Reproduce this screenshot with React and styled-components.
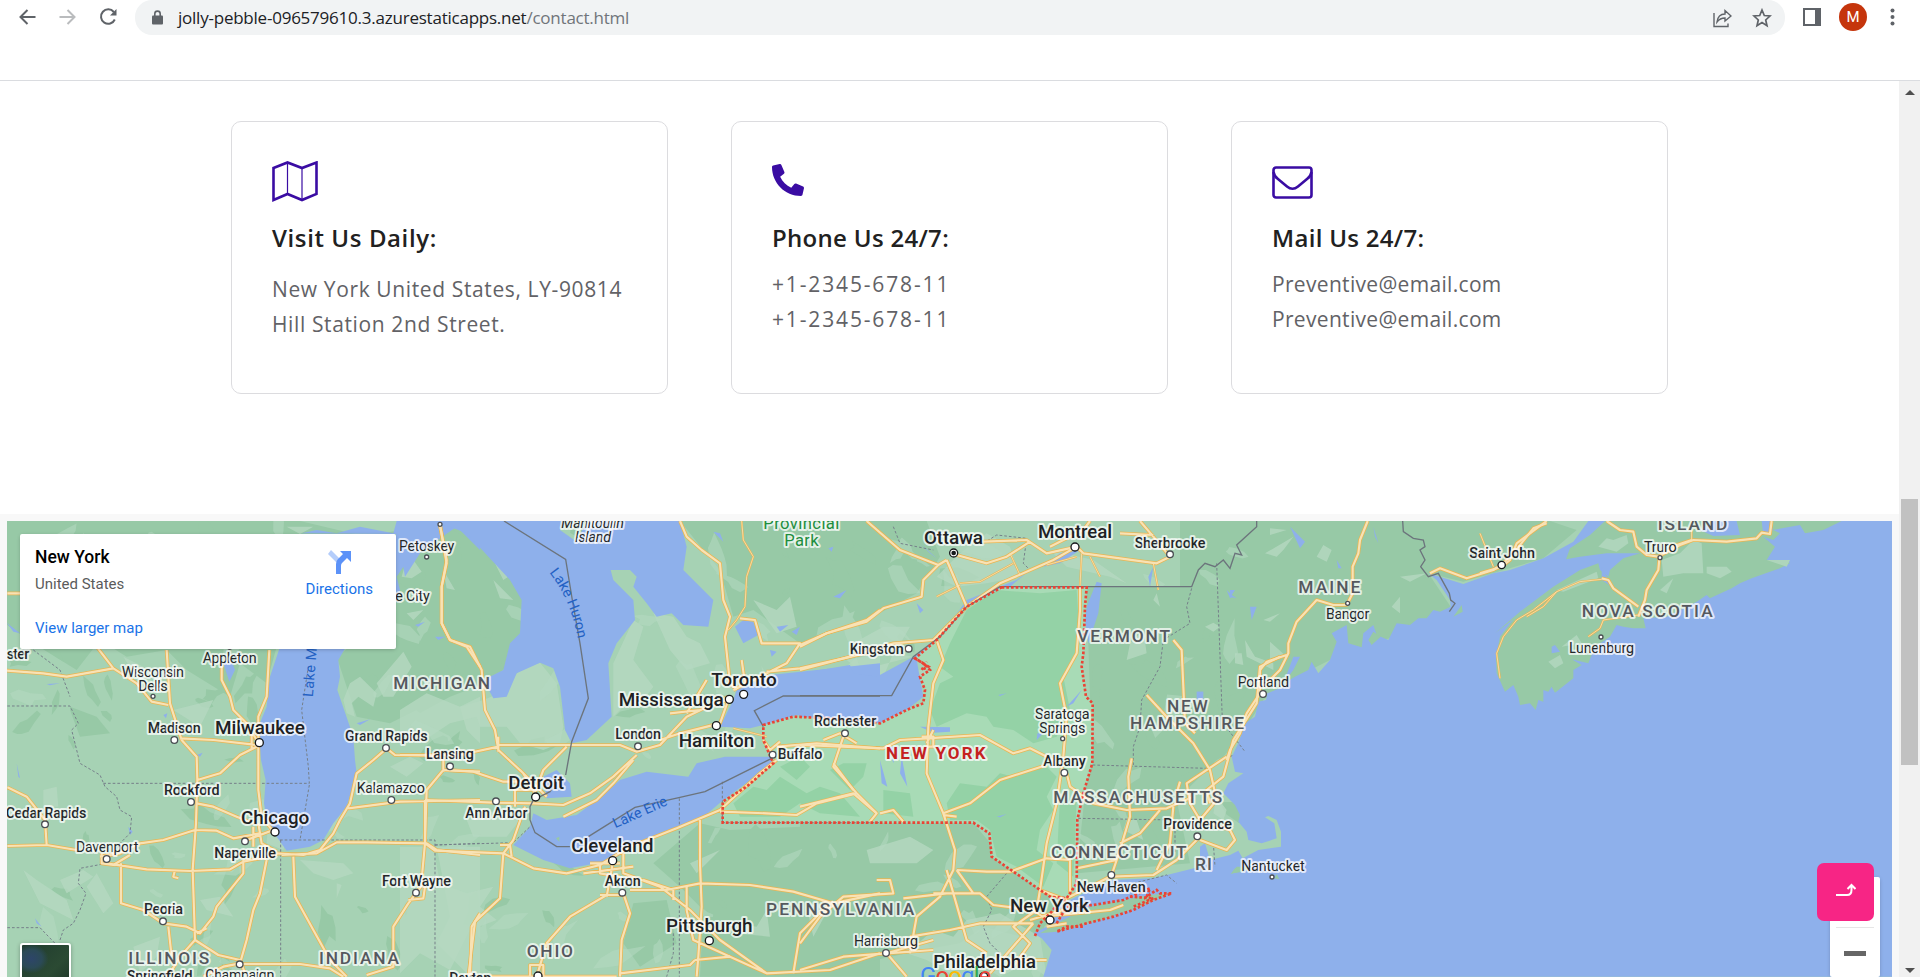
import React from "react";
import styled, { createGlobalStyle, css } from "styled-components";
import { FaPhone } from "react-icons/fa";

const Global = createGlobalStyle`
  * { box-sizing: border-box; }
  body { margin: 0; background: #fff; overflow: hidden; font-family: "Open Sans", "Noto Sans", sans-serif; }
`;

const Browser = styled.div`
  height: 977px;
  display: flex;
  flex-direction: column;
`;

const Toolbar = styled.header`
  height: 81px;
  flex: none;
  display: flex;
  align-items: flex-start;
  border-bottom: 1px solid #dadce0;
`;

const NavButtons = styled.div`
  width: 135px;
  height: 34px;
  padding-left: 19px;
  display: flex;
  align-items: center;
  gap: 23px;
`;

const AddressBar = styled.div`
  width: 1650px;
  height: 35px;
  padding: 0 13px 0 17px;
  display: flex;
  align-items: center;
  background: #f1f3f4;
  border-radius: 17px;
`;

const Url = styled.span`
  flex: 1;
  padding-left: 15px;
  color: #202124;
  font-size: 17px;
  line-height: 35px;
  letter-spacing: -0.23px;
  span { color: #70757a; }
`;

const AddressActions = styled.div`
  display: flex;
  align-items: center;
  gap: 20px;
`;

const ToolbarEnd = styled.div`
  height: 34px;
  padding-left: 18px;
  display: flex;
  align-items: center;
`;

const Avatar = styled.div`
  width: 28px;
  height: 28px;
  margin: 0 16px 0 18px;
  border-radius: 50%;
  background: #c5350c;
  color: #fff;
  font: 15px/28px Roboto, sans-serif;
  text-align: center;
`;

const Viewport = styled.div`
  flex: 1;
  min-height: 0;
  display: flex;
`;

const Page = styled.main`
  width: 1899px;
  display: flex;
  flex-direction: column;
`;

const Cards = styled.section`
  height: 433px;
  padding: 40px 0 0 231px;
  display: flex;
  gap: 63px;
`;

const Card = styled.article`
  width: 437px;
  height: 273px;
  padding: 38px 30px 38px 40px;
  border: 1px solid #dcdcdf;
  border-radius: 10px;
`;

const CardIcon = styled.div`
  height: 44px;
  display: flex;
  align-items: center;
  color: #3a0ca3;
`;

const PhoneIcon = styled(FaPhone)`
  transform: translateY(-2px) scaleX(-1);
`;

const CardTitle = styled.h3`
  margin: 17px 0 0;
  color: #212121;
  font-size: 24px;
  font-weight: 600;
  line-height: 34px;
  letter-spacing: ${(p) => p.$track}px;
  white-space: nowrap;
`;

const CardText = styled.p`
  margin: ${(p) => p.$gap}px 0 0;
  color: #626266;
  font-size: 21px;
  line-height: 35px;
  letter-spacing: ${(p) => p.$track}px;
  white-space: nowrap;
`;

const MapSection = styled.section`
  flex: 1;
  padding: 7px 7px 0;
  background: #f8f8f8;
`;

const MapFrame = styled.div`
  position: relative;
  height: 456px;
  overflow: hidden;
  font-family: Roboto, sans-serif;
`;

const MapDrawing = styled.svg`
  display: block;
`;

const PlaceCard = styled.div`
  position: absolute;
  left: 13px;
  top: 13px;
  width: 376px;
  height: 115px;
  padding: 11px 23px 0 15px;
  display: flex;
  justify-content: space-between;
  background: #fff;
  border-radius: 2px;
  box-shadow: 0 1px 4px -1px rgba(0, 0, 0, 0.3);
`;

const PlaceInfo = styled.div`
  display: flex;
  flex-direction: column;
`;

const PlaceName = styled.div`
  color: #000;
  font-size: 17.5px;
  font-weight: 500;
  line-height: 24px;
`;

const PlaceRegion = styled.div`
  margin-top: 5px;
  color: #5b5b5b;
  font-size: 15px;
  line-height: 20px;
`;

const MapLink = styled.a`
  color: #1a73e8;
  font-size: 15px;
  line-height: 20px;
`;

const LargerMap = styled(MapLink)`
  margin-top: 24px;
`;

const Directions = styled.div`
  padding-top: 5px;
  display: flex;
  flex-direction: column;
  align-items: center;
  gap: 5px;
`;

const Satellite = styled.div`
  position: absolute;
  left: 13px;
  top: 422px;
  width: 51px;
  height: 50px;
  border: 2px solid #fff;
  border-radius: 3px;
  background: radial-gradient(ellipse at 20% 30%, #2d4569 0, #2b4a56 20%, transparent 32%),
    linear-gradient(135deg, #1f3a2e, #2b4a33 60%, #1c3427);
  box-shadow: 0 1px 4px rgba(0, 0, 0, 0.3);
`;

const ZoomControl = styled.div`
  position: absolute;
  left: 1823px;
  top: 356px;
  width: 50px;
  height: 100px;
  padding: 50px 6px 0;
  background: #fff;
  border-radius: 2px;
  box-shadow: 0 1px 4px -1px rgba(0, 0, 0, 0.3);
`;

const ZoomOut = styled.div`
  height: 50px;
  border-top: 1px solid #e6e6e6;
  display: flex;
  justify-content: center;
  padding-top: 23px;
  &::after { content: ""; width: 22px; height: 5px; background: #666; }
`;

const BackToTop = styled.button`
  position: absolute;
  left: 1810px;
  top: 342px;
  width: 57px;
  height: 58px;
  padding: 0 0 4px;
  border: 0;
  border-radius: 7px;
  background: #f72585;
  display: flex;
  align-items: center;
  justify-content: center;
`;

const GoogleMark = styled.div`
  position: absolute;
  left: 913px;
  top: 443px;
  font-size: 24px;
  line-height: 24px;
  letter-spacing: -0.9px;
`;

const Letter = styled.span`
  color: ${(p) => p.$c};
`;

const Scrollbar = styled.aside`
  width: 21px;
  background: #f1f1f1;
  display: flex;
  flex-direction: column;
  align-items: center;
  padding: 9px 0 4px;
`;

const Thumb = styled.div`
  width: 17px;
  height: 266px;
  margin: 404px 0 auto;
  background: #c1c1c1;
`;

const labelKinds = {
  city: css`font-size: 57px; font-weight: 500; fill: #202124;`,
  town: css`font-size: 43px; font-weight: 500; fill: #24272a;`,
  small: css`font-size: 43px; font-weight: 400; fill: #24272a;`,
  isle: css`font-size: 43px; font-style: italic; fill: #24272a;`,
  state: css`font-size: 52px; font-weight: 500; fill: #55585e;`,
  home: css`font-size: 51px; font-weight: 700; fill: #c5221f;`,
  park: css`font-size: 50px; font-weight: 400; fill: #1e8e3e;`,
  lake: css`font-size: 43px; fill: #2361c4; stroke: none;`,
};

const MapLabel = styled.text`
  font-family: Roboto, sans-serif;
  paint-order: stroke;
  stroke: rgba(255, 255, 255, 0.72);
  stroke-width: 12px;
  stroke-linejoin: round;
  ${(p) => labelKinds[p.$kind]}
`;

/* Horizontal origins of the map sheets; each sheet is drawn at three units per pixel. */
const sheets = { west: 0, lakes: 400, york: 800, maine: 1180, nova: 1480 };
const place = (sheet) => `translate(${sheets[sheet]} 510) scale(0.33333)`;

const forest = [
  ["west", "M0 33H900L1100 80 1200 60 1440 33V420L1330 560 1170 640 1070 620 1010 440 1190 300 830 410 800 520 720 460 690 560 560 480 500 420 380 440 300 390 230 480 100 400 0 330Z"],
  ["west", "M210 600L240 680 330 670 290 620 210 590Z"],
  ["lakes", "M0 60L120 40 270 120 370 200 360 400 310 480 255 520 150 560 60 610 0 560Z"],
  ["lakes", "M840 33H1440V300L1290 370 1200 400 1060 300 1000 320 960 180 910 120Z"],
  ["lakes", "M990 960L1440 940V1400H900L910 1200 840 1130 760 1060 900 940Z"],
  ["lakes", "M700 1180L800 1170 830 1300 720 1370 670 1300Z"],
  ["york", "M0 33H380L420 140 350 250 200 330 60 350 0 400Z"],
  ["york", "M860 230L1180 230 1320 33H1440V500L1290 690 1260 740 1130 870 1170 1060 830 1090 860 800 870 560Z"],
  ["york", "M0 940H520L640 1080 800 1170 700 1290 550 1250 480 1300 320 1330 0 1400Z"],
  ["maine", "M0 33H1110L1190 60 1090 145 850 215 745 190 812 290 640 380 450 450 350 500 250 570 180 680 130 740 0 800Z"],
];

const pale = [
  ["west", "M1215 165L1240 150 1265 185 1235 205 1205 200ZM1330 180L1365 240 1340 235ZM1030 570L1050 520 1080 500 1130 550 1120 590 1075 560 1055 580 1065 620 1040 610ZM1130 520L1210 425 1235 470 1180 560 1150 560ZM860 50L940 50 900 72ZM370 440L430 470 470 540 420 520Z"],
  ["west", "M520 600L640 570 600 650ZM820 730L840 830 870 950 850 1020 800 1000ZM290 1090L340 1180 310 1210 260 1130ZM180 1110L250 1080 280 1100 200 1150ZM70 1080L110 1110 200 1170 220 1230 120 1180ZM130 840L170 830 175 890 130 890ZM600 1170L660 1160 700 1220 620 1200ZM1010 1120L1025 1125 1010 1165ZM400 1310L480 1280 470 1340 420 1390ZM900 1050L1030 1060 1060 1090 1000 1110 940 1090ZM1310 1010H1440V1390H1400L1310 1300 1350 1220ZM1170 770L1230 740 1270 760 1220 800ZM1380 590L1440 560V700L1400 660Z"],
  ["lakes", "M0 600L80 550 180 590 250 570 300 550 360 480 420 458 470 520 490 650 480 700 430 720 360 700 320 650 240 650 230 620 150 640 60 700 0 670ZM640 460L700 330 730 350 700 450 760 530 730 570 690 570 640 620ZM760 310L820 320 860 380 900 400 930 460 860 480 810 420ZM275 140L325 200 310 210ZM280 210L340 270 300 265ZM20 310L70 300 40 330Z"],
  ["lakes", "M0 1010H100L120 1120 200 1150 280 1130 240 1190 290 1230 210 1260 150 1380 60 1330 0 1390ZM290 900L360 930 320 980 220 980 200 930ZM870 1060L960 1020 890 1090ZM1000 1240L1070 1250 1100 1200 1110 1280 1000 1270ZM1060 270L1130 300 1170 260 1190 350 1130 370ZM1340 450L1440 430 1440 500 1390 490Z"],
  ["york", "M560 70L630 110 660 200 560 220 470 230 410 200 480 130ZM750 120L880 150 980 220 930 200 800 170ZM160 400L250 350 330 350 290 420 180 430 130 480 250 500 280 430 340 440 180 480ZM1060 270L1070 250 1080 290ZM990 400L1030 360 1040 430 980 450ZM200 1020L330 980 400 1020 350 1060 210 1060ZM20 1190L100 1170 40 1280ZM320 1330L400 1260 460 1280 500 1230 600 1210 720 1280 740 1400 680 1360 600 1400 520 1350 450 1390 380 1350ZM980 930L1010 930 1030 990 970 960Z"],
  ["maine", "M255 130L340 80 310 120 290 140ZM410 140L430 105 455 120 440 155ZM270 55L320 60 270 75ZM250 330L300 310 270 335ZM75 350L100 338 120 350 100 365ZM165 430L185 430 190 465 165 460ZM270 395L320 440 270 455ZM195 390L225 440 280 460 280 480 200 440ZM635 290L660 260 660 310ZM660 200L740 190 690 215ZM110 860L140 900 130 930 100 910Z"],
];

/* Small vegetation patches scattered over the inland part of the map. */
const scatter = (count, seed) => {
  let s = seed;
  const next = () => {
    s = (s * 16807) % 2147483647;
    return s / 2147483647;
  };
  return Array.from({ length: count }, () => {
    const cx = 10 + next() * 1240;
    const cy = 525 + next() * 450;
    const r = 4 + next() * 13;
    const tilt = next() * 3;
    const points = Array.from({ length: 9 }, (_, i) => {
      const a = (i / 9) * Math.PI * 2;
      const reach = r * (0.45 + next() * 0.8);
      const px = Math.cos(a) * reach * 1.5;
      const py = Math.sin(a) * reach * 0.6;
      return `${(cx + px * Math.cos(tilt) - py * Math.sin(tilt)).toFixed(1)} ${(cy + px * Math.sin(tilt) + py * Math.cos(tilt)).toFixed(1)}`;
    });
    return `M${points.join("L")}Z`;
  }).join("");
};
const palePatches = scatter(110, 4211);
const forestPatches = scatter(110, 907);

const water = [
  ["west", "M840 410L1050 390 1015 450 1020 500 1012 540 1060 680 1065 750 1070 790 1040 890 1000 940 970 990 930 1010 860 1022 830 980 800 930 792 880 797 810 783 750 775 650 800 590 810 500ZM905 70L950 60 1010 70 1080 50 1180 70 1190 33H1440V120L1370 50 1270 120 1210 170 1190 200 1200 240 1188 280V72ZM670 460L690 440 705 480 688 515ZM20 338L40 365 60 370ZM1210 170L1240 130 1260 130 1215 200Z"],
  ["west", "M590 735L608 728 600 740ZM50 760L60 805 55 800ZM490 615L502 610 498 625ZM140 522L180 520 150 526ZM1070 640L1110 628 1080 645ZM385 950L398 965 390 975ZM1305 380L1335 380 1315 390ZM1245 345L1275 335 1255 350ZM105 1225L125 1250 110 1240Z"],
  ["lakes", "M90 33H490L480 60 530 95 560 33H840L860 110 850 180 940 270 925 350 850 345 815 310 770 320 740 280 700 230 710 200 690 180 632 180 640 210 700 270 705 330 650 400 625 460 635 620 560 690 515 700 495 660 480 530 460 475 420 458 350 490 320 560 280 565 250 510 310 480 330 400 360 370 365 270 330 210 200 70 150 50ZM400 910L440 930 530 915 590 870 660 810 740 785 865 800 890 760 975 740 1115 740 1120 760 970 870 900 930 760 980 690 1010 640 1050 510 1075 430 1050 340 1005 390 950ZM430 800L470 780 510 820 515 860 440 865ZM960 650L1000 570 1010 540 1110 495 1440 460V605L1290 635 1190 615 1090 645 1050 655ZM1005 350L1030 330 1060 335 1075 375 1030 400ZM1130 350L1165 345 1140 365ZM1110 420L1130 425 1115 440ZM1175 365L1200 350 1190 375ZM940 65L970 95 960 70ZM1285 115L1300 110 1295 125Z"],
  ["york", "M0 490L150 465 160 490 230 500 340 440 400 400 380 420 350 450 370 560 320 600 240 640 0 640ZM860 290L890 215 905 220 895 310 865 400 855 330ZM760 870L775 920 760 1000 745 1000ZM650 210L690 180 630 230 480 300 420 380 500 270ZM730 170L780 130 840 120 780 160ZM1190 545L1210 545 1210 570 1190 570ZM1060 170L1050 230 1045 200ZM1350 290L1370 290 1355 330ZM360 100L410 145 390 130ZM350 280L370 300 360 310ZM1280 240L1300 260 1290 265ZM100 260L140 240 120 265Z"],
  ["maine", "M330 50L375 95 360 115ZM150 240L165 240 155 255 170 265 150 260ZM340 440L360 440 340 480 310 520ZM50 545L70 545 60 570ZM580 50L595 100 585 80ZM470 150L485 175 475 175Z"],
];

const ocean = "M-410 1400L-385 1320 -415 1285 -440 1270 -400 1250 -370 1190 -310 1160 -205 1110 -80 1105 0 1085 60 1070 60 1010 75 1000 90 1050 150 1035 175 1022 188 1045 235 1020 303 1010 303 965 290 930 265 918 255 922 283 940 290 985 245 1000 205 990 200 965 175 935 180 915 165 885 130 850 145 820 190 790 165 785 155 740 175 700 195 640 225 620 235 575 258 570 262 550 310 530 320 515 345 500 385 480 395 455 415 490 450 450 470 395 455 370 500 345 505 400 545 412 550 370 580 345 590 375 625 390 650 340 690 345 715 325 740 325 760 300 780 305 812 290 810 270 770 210 745 190 850 222 940 190 990 180 1090 145 1180 95 1225 33H2150V1400Z";
const islands = [
  ["nova", "M375 33L330 75 270 115 258 148 300 140 380 130 480 130 430 145 390 180 385 200 360 180 355 160 300 180 220 230 120 305 45 370 100 328 60 380 48 440 50 490 75 545 100 525 115 560 120 585 150 580 167 600 175 570 190 575 190 540 205 545 215 530 225 548 280 505 280 480 305 465 275 448 325 460 345 410 390 380 410 345 430 350 460 355 497 355 490 325 560 320 650 275 680 255 690 265 755 235 780 220 815 205 870 185 900 175 930 160 915 150 860 150 885 110 850 80 880 90 900 70 880 60 960 45 975 70 1030 60 1085 33Z"],
  ["york", "M770 1240L870 1190 970 1170 1050 1155 1110 1150 1020 1190 920 1225 830 1250 770 1265 720 1270ZM1295 1090L1310 1070 1350 1070 1330 1085Z"],
  ["maine", "M820 320L845 285 848 305ZM565 390L580 365 602 380 575 405ZM283 1105L290 1092 298 1108ZM152 1092L165 1075 200 1070 180 1085Z"],
  ["lakes", "M468 985L478 980 478 995Z"],
];
const islandPale = [
  ["nova", "M355 110L380 85 400 90 440 75 445 100 410 125ZM545 150L600 130 640 90 665 100 670 190 610 190 550 200ZM680 170L740 170 755 185 720 205 680 190ZM540 240L580 205 560 250ZM205 455L240 435 250 460 225 475ZM230 240L350 185 355 205 250 245ZM860 150H930L920 170ZM245 410L290 375 305 400Z"],
];
const coves = [
  ["nova", "M660 60L700 33H770L780 75 700 78ZM845 33H870L880 60 850 75ZM215 410L225 405 240 425 215 430ZM365 170L380 200 395 230 365 210Z"],
];

const newYork = "M605 232L860 232 855 290 850 430 845 470 858 560 878 580 877 760 850 850 832 930 830 1120 800 1165 750 1160 640 1085 575 1040 568 970 520 938H-232L-232 875 -160 830 -80 760 -110 690 -110 645 -20 620 90 625 240 640 320 600 370 580 375 540 360 500 390 480 370 460 345 445 410 390 500 290Z";
const yorkShades = "M500 300L590 240 720 250 830 240 840 400 790 500 810 600 770 680 700 700 640 660 580 650 560 620 500 610 410 650 390 600 420 520 460 500 420 470 450 400ZM480 820L560 830 600 790 640 800 740 770 770 800 740 860 760 900 720 960 710 1020 760 1060 730 1130 650 1070 590 1040 570 960 530 930 450 930 440 880ZM-200 880L-140 830 -100 840 -60 800 20 850 60 830 120 850 180 920 60 910 0 880 -60 920 -180 920ZM250 840L330 850 340 920 250 910ZM90 780L130 760 200 760 190 800 150 840ZM-60 770L0 740 30 770 -10 810ZM780 860L830 870 820 1100 770 1060Z";

const roads = [
  ["west", "M22 250H60M20 482L130 490 200 500 340 475 290 410M340 475L410 520 455 575 505 585M500 420L510 580 545 690 590 740 592 810 588 940 578 1080 585 1290 655 1335 720 1350 735 1390M665 460V510L690 560 700 600 740 640 770 690M808 420L800 560 775 620 775 840 785 920 820 965M540 685L640 690 770 705M770 710L720 735 660 790 592 810M590 880L640 890 710 920 760 940M22 832L80 860 135 930 140 1005M22 1008L140 1005 230 1020M300 1040L360 1030 420 1000 490 990 585 960 650 962 700 985 780 970M320 1060L440 1078 570 1083 690 1078 730 1055 830 1035M363 1060V1180L430 1200 490 1240 560 1250 600 1270 640 1220 650 1190 730 1090V1050M525 1080L520 1100 535 1105M505 1250L515 1340M585 1290L540 1340 510 1390M800 1050L780 1150 760 1200 740 1290 720 1360 670 1370 610 1400M830 1030L910 1035 960 1020 1000 970 1020 930 1050 880 1070 790 1120 750 1160 715 1185 735 1320 737M845 1035L950 1030 1010 997 1100 997 1280 1000 1310 1020 1440 1035M1045 895L1200 875 1440 870M1440 785L1330 780 1280 840 1275 1000 1263 1130 1225 1180 1180 1250V1370L1100 1395M880 1040L885 1160 940 1260 990 1350 1040 1400M720 1362H900L990 1375 1030 1400M1320 45L1340 160 1325 230 1325 340 1350 390 1400 410 1440 470M760 950V1010M775 940L785 1000 830 1025M740 990L820 960M1440 1210L1415 1250 1410 1400M590 1270L620 1255M305 1030V1060L340 1065 390 1035M755 670V720M1330 740V785M1225 1170L1270 1165 1275 1130"],
  ["lakes", "M120 45L140 150 125 230 125 340 150 390 210 410 245 480 255 600 285 660 295 720 370 790 405 850M295 705H660L710 725 780 705 860 620 985 560M0 735H180L295 710M130 780L220 785 310 815H370M75 870L280 878 400 880 490 885 570 850 640 800 710 735M490 920L590 870 640 820 700 750M375 890L340 990 310 1030 300 1165 225 1235 205 1400M75 870V1000L105 1022 310 1030M310 1030L400 1075 500 1090 600 1065 690 1010 830 955 960 900 1080 790 1130 750M360 780L440 860M500 710L430 780 400 860M840 33L860 80 905 120 960 160 970 270 990 320 975 380 990 520 1010 540M1020 325L1065 330 1085 400 1200 400 1160 460 1080 500 1000 540M1100 485L1200 475 1440 420M1200 405L1280 370 1400 330 1440 300M1025 450L1035 520M985 570L960 640 840 670 780 690M810 610L900 600 980 570M920 510L860 610M1130 710L1250 700 1440 715M1270 690L1320 670 1370 700M1330 680L1300 770 1370 850 1430 910M960 905L1100 910 1190 915 1250 880 1370 850M900 930V1060L905 1190 895 1340 890 1400M640 1050L620 1160M670 1030V1090L780 1130 870 1200 960 1290 1100 1390M620 1155L510 1220 440 1300 410 1400M690 1140H800L900 1120 1050 1125 1180 1145 1300 1180 1440 1150M670 1150L690 1210 665 1290 660 1400M550 1090L700 1070M860 1125V1200L880 1290 990 1340M885 1350L990 1340 1100 1390 1290 1380 1440 1330M660 1390L870 1365 885 1350M1180 1390L1200 1270 1260 1210 1300 1175M270 1400H650M390 1400V1365H430V1400M295 680V725M340 840H400M345 840V890M300 1005H330L335 1040M600 1060V1090L660 1100M570 1060H660M600 1155H670M1090 690L1110 720 1140 695M730 1110L820 1140 820 1170"],
  ["york", "M200 33L300 120 415 165 440 150M415 165L370 210 365 260 250 295 200 335 80 370 0 410M440 150L500 290M470 135L560 160 620 140 690 95M550 95L680 90 740 130 830 110M830 110L760 150 600 220 500 290 400 390 280 400 150 440 0 480M830 110L850 130 1070 160 1110 140M1110 140L1060 80 1020 33M960 70L1060 75M750 110L850 60 870 33M840 230L840 300 830 430 780 520 800 620 790 740 770 880 740 1000 720 1140 800 1170M410 390L430 450 400 520 385 650 380 790 430 910 465 1020 460 1080 420 1160 350 1220 330 1330M0 705L250 715 300 690 380 685 540 675 640 730 690 715 780 760M0 890L160 850 230 910 210 935M100 760L160 840M240 910L280 900 310 935M430 910L510 880 600 810 740 765M800 790L810 830 880 880 980 900 1100 895 1180 860M1040 555L1100 620 1180 700 1230 780 1250 870 1200 930M1120 390L1145 420 1155 640 1185 670M1440 440L1380 470 1370 580 1300 690 1270 800 1220 840 1230 880M1280 740L1160 820 1170 880 1200 930 1290 960 1305 990 1280 1020 1200 990M995 745L985 800 990 920 960 1020 935 1095M935 1100L1060 1095 1130 1050 1200 980M1080 900L1020 970 960 1000M1120 890L1110 1000 1070 1080M830 1075L950 1050 900 1060M470 1080L560 1085 630 1085 740 1045 810 1050 810 1150M400 1150L540 1150 580 1185 700 1200 740 1230M470 1080L520 1150M440 1080L480 1220 500 1290 560 1330M330 1280L450 1260 540 1240 700 1240M720 1140L710 1200 640 1250 690 1300 640 1370M0 1300L60 1220 130 1160 280 1150 270 1110 230 1110M310 1165L440 1150M260 1330L400 1320M260 1330L320 1400M0 1380L130 1340 260 1330 400 1290M720 1220L830 1210 930 1200 970 1185M800 1165L930 1100M570 1390L700 1240M640 1350H740M365 680H400V710H380M430 915L470 920M1140 815L1130 850M740 1250L800 1240M690 1230L790 1200M380 700L400 660"],
  ["maine", "M563 33L540 90 535 130 518 170 518 250 500 285 460 285 410 270 350 335 325 400 325 430 300 480 250 530M320 435L260 455 240 480 240 550 200 610 180 670 150 720 140 750M1100 40L1060 55 1000 130 970 160 940 180 860 205 780 175 750 190"],
  ["nova", "M380 33L420 60 460 65 470 110 500 135 535 140 600 105 640 90 740 95 830 85 845 68 870 72 875 33M538 145L535 180 500 240 495 270 475 320M475 290L400 235 385 210 365 205M200 33L110 100 90 150 65 170 0 190M575 110L635 90"],
];
const thinRoads = [
  ["lakes", "M1025 33L1030 90 1060 140 1040 200 1035 290 1010 330 985 360M1000 655L1060 670 1100 680"],
  ["york", "M480 220L540 215 640 160M630 130L660 195M410 260L480 225M845 130L840 230M1060 160L1075 240M740 165L830 140M870 140L900 200"],
  ["nova", "M365 208L300 215 230 245 160 300 110 330 70 380 50 430 60 505M230 245L190 290 140 320M475 315L370 330 360 355 325 380M0 70L40 170M635 90V33"],
];
const solidBorders = [
  ["lakes", "M312 33L497 148 517 270 540 400 565 565 515 695 497 795M420 860L450 845 470 815M405 860L390 890 390 930 405 968 470 1010H510M565 980L705 892 840 862 915 845 1115 745M1090 650L1063 602 1150 558H1440"],
  ["york", "M0 557H275L340 440 420 380 500 290 600 230 860 230H1175L1195 180 1215 160 1245 170 1270 150 1290 175 1305 130 1325 135 1310 105 1370 50V33"],
  ["maine", "M668 33L670 65 700 85 730 90 735 110 720 120 735 150 722 170 745 200 775 190 808 250 812 270 825 280 808 305"],
];
const dashedBorders = [
  ["west", "M22 588H210L235 640 215 660 240 760 300 795 315 830 350 860 360 900 395 920 390 970 360 1000 350 1020M310 820H928L925 770 905 600 925 470M928 825L900 990M840 990H1305V1400M842 990V1400M320 1060L240 1075 235 1120 258 1150 240 1200 220 1240 190 1260 180 1290M22 1253H120L165 1300M1305 1005L1440 1000M100 420L180 480 210 560"],
  ["lakes", "M105 1005L340 998 390 950M838 865V1400M967 815V940M820 1270V1330L800 1400M967 938H1440"],
  ["york", "M878 765L1220 775 1300 735M1250 160L1267 630M1175 235L1160 290 1170 340 1090 390 1080 470 1025 570 1020 650 1000 710V765M835 925L1125 930V1030M1240 1000L1245 1070M620 1090L560 1160 575 1200 550 1250 570 1300 600 1330M280 50L300 100 400 120M550 100L590 75 680 85 670 160 690 180M960 1130L1100 1095 1130 1120"],
  ["maine", "M145 660L195 725"],
];
const redBorder = [
  newYork,
  "M770 1240L800 1190 880 1185 970 1170 1050 1135 1040 1160 1070 1140 1080 1150 1115 1150 1060 1170 1000 1200 940 1220 860 1240 770 1265 800 1250 850 1250M705 1278L720 1240 760 1200 770 1180 800 1170M990 1160L1060 1165 1000 1190M345 445L385 470 365 480 380 455",
];

const labels = [
  ["west", "Petoskey", 1197, 124, 166, "small"],
  ["west", "e City", 1186, 272, 103, "small"],
  ["west", "ster", 20, 448, 68, "town"],
  ["west", "Appleton", 608, 459, 162, "small"],
  ["west", "Wisconsin", 365, 501, 187, "small"],
  ["west", "Dells", 415, 542, 88, "small"],
  ["west", "Madison", 443, 670, 159, "town"],
  ["west", "Milwaukee", 645, 672, 270, "city"],
  ["west", "MICHIGAN", 1180, 536, 290, "state"],
  ["west", "Grand Rapids", 1035, 694, 248, "town"],
  ["west", "Lansing", 1278, 748, 144, "town"],
  ["west", "Kalamazoo", 1070, 850, 205, "small"],
  ["west", "Rockford", 492, 855, 167, "town"],
  ["west", "Chicago", 723, 941, 205, "city"],
  ["west", "Cedar Rapids", 17, 923, 242, "town"],
  ["west", "Davenport", 228, 1026, 187, "small"],
  ["west", "Naperville", 643, 1045, 185, "town"],
  ["west", "Fort Wayne", 1146, 1127, 207, "town"],
  ["west", "Peoria", 432, 1213, 117, "town"],
  ["west", "ILLINOIS", 385, 1361, 243, "state"],
  ["west", "INDIANA", 957, 1361, 240, "state"],
  ["west", "Springfield", 381, 1412, 197, "town"],
  ["west", "Champaign", 616, 1410, 207, "small"],
  ["lakes", "Manitoulin", 484, 55, 188, "isle"],
  ["lakes", "Island", 525, 96, 108, "isle"],
  ["lakes", "Provincial", 1090, 58, 228, "park"],
  ["lakes", "Park", 1153, 109, 103, "park"],
  ["lakes", "Toronto", 934, 528, 196, "city"],
  ["lakes", "Mississauga", 656, 588, 315, "city"],
  ["lakes", "London", 646, 688, 137, "town"],
  ["lakes", "Hamilton", 836, 711, 227, "city"],
  ["lakes", "Rochester", 1242, 648, 187, "town"],
  ["lakes", "Buffalo", 1133, 748, 134, "town"],
  ["lakes", "Detroit", 325, 836, 167, "city"],
  ["lakes", "Ann Arbor", 196, 925, 187, "town"],
  ["lakes", "Cleveland", 514, 1026, 246, "city"],
  ["lakes", "Akron", 614, 1127, 108, "town"],
  ["lakes", "Pittsburgh", 798, 1267, 260, "city"],
  ["lakes", "PENNSYLVANIA", 1098, 1216, 445, "state"],
  ["lakes", "OHIO", 380, 1340, 139, "state"],
  ["lakes", "Dayton", 148, 1420, 126, "town"],
  ["york", "Ottawa", 372, 102, 177, "city"],
  ["york", "Montreal", 714, 84, 222, "city"],
  ["york", "Sherbrooke", 1004, 113, 212, "town"],
  ["york", "Kingston", 149, 431, 162, "town"],
  ["york", "VERMONT", 832, 396, 278, "state"],
  ["york", "NEW", 1101, 605, 122, "state"],
  ["york", "HAMPSHIRE", 990, 658, 342, "state"],
  ["york", "Saratoga", 705, 628, 164, "small"],
  ["york", "Springs", 718, 669, 138, "small"],
  ["york", "NEW YORK", 258, 747, 299, "home"],
  ["york", "Albany", 730, 767, 127, "town"],
  ["york", "MASSACHUSETTS", 760, 880, 507, "state"],
  ["york", "Providence", 1090, 958, 206, "town"],
  ["york", "CONNECTICUT", 753, 1045, 407, "state"],
  ["york", "RI", 1185, 1079, 51, "state"],
  ["york", "New Haven", 830, 1146, 207, "town"],
  ["york", "New York", 630, 1205, 237, "city"],
  ["york", "Harrisburg", 162, 1309, 192, "small"],
  ["york", "Philadelphia", 400, 1375, 308, "city"],
  ["maine", "MAINE", 355, 248, 186, "state"],
  ["maine", "Bangor", 438, 327, 130, "small"],
  ["maine", "Portland", 173, 531, 154, "small"],
  ["maine", "Saint John", 868, 145, 197, "town"],
  ["maine", "Nantucket", 184, 1084, 190, "small"],
  ["nova", "ISLAND", 533, 60, 209, "state"],
  ["nova", "Truro", 492, 126, 98, "small"],
  ["nova", "NOVA SCOTIA", 305, 322, 393, "state"],
  ["nova", "Lunenburg", 267, 428, 195, "small"],
];

const dots = [
  ["west", 778, 698, 12], ["west", 825, 966, 12], ["west", 523, 690, 10], ["west", 1158, 714, 10], ["west", 1350, 769, 10],
  ["west", 1174, 870, 10], ["west", 573, 876, 10], ["west", 735, 994, 10], ["west", 135, 943, 10], ["west", 320, 1047, 10],
  ["west", 1248, 1148, 10], ["west", 489, 1234, 10], ["west", 719, 1363, 10], ["west", 459, 559, 6], ["west", 1280, 141, 6],
  ["west", 1320, 43, 6], ["west", 689, 412, 6],
  ["lakes", 988, 568, 12], ["lakes", 1031, 553, 12], ["lakes", 949, 647, 12], ["lakes", 714, 709, 10], ["lakes", 1118, 734, 10],
  ["lakes", 1335, 670, 10], ["lakes", 407, 861, 12], ["lakes", 288, 874, 10], ["lakes", 638, 1052, 12], ["lakes", 667, 1148, 10],
  ["lakes", 928, 1292, 12], ["lakes", 414, 1398, 12],
  ["york", 461, 129, 12], ["york", 825, 111, 12], ["york", 1110, 133, 10], ["york", 326, 416, 10], ["york", 788, 686, 6],
  ["york", 793, 788, 10], ["york", 1192, 979, 10], ["york", 934, 1095, 10], ["york", 750, 1230, 12], ["york", 258, 1329, 10],
  ["york", 551, 1400, 12], ["york", 1389, 552, 10],
  ["maine", 503, 280, 6], ["maine", 965, 165, 11], ["maine", 276, 1101, 6],
  ["nova", 540, 143, 6], ["nova", 363, 381, 6],
];

const Layer = ({ shapes, ...paint }) =>
  shapes.map(([sheet, d], i) => (
    <path key={i} d={d} transform={place(sheet)} {...paint} />
  ));

const RegionMap = () => (
  <MapDrawing width="1885" height="456" viewBox="7 521 1885 456">
    <rect x="0" y="510" width="1900" height="467" fill="#a6d2b4" />
    <Layer shapes={forest} fill="#97c9a6" />
    <path d={forestPatches} fill="#97c9a6" />
    <Layer shapes={pale} fill="#b5d8c1" opacity=".8" />
    <path d={palePatches} fill="#b5d8c1" opacity=".55" />
    <Layer shapes={water} fill="#8eb0eb" />
    <path d={ocean} transform={place("maine")} fill="#8eb0eb" />
    <Layer shapes={islands} fill="#97c9a6" />
    <Layer shapes={islandPale} fill="#aed5bb" />
    <Layer shapes={coves} fill="#8eb0eb" />
    <path d={newYork} transform={place("york")} fill="#a8dbb6" />
    <path d={yorkShades} transform={place("york")} fill="#94d2a6" />
    <path d="M265 710L290 710 280 760ZM240 750L262 830 245 820ZM360 650L450 652 450 665 400 668ZM800 590L845 540 820 580ZM305 740L322 830 300 790ZM712 670H730L710 690ZM595 555L620 550 600 558ZM590 920L620 912 600 922Z" transform={place("york")} fill="#8eb0eb" />
    <Layer shapes={dashedBorders} fill="none" stroke="#75808a" strokeWidth="3" strokeDasharray="8 6" />
    <Layer shapes={roads} fill="none" stroke="#e9b552" strokeWidth="11" strokeLinejoin="round" />
    <Layer shapes={thinRoads} fill="none" stroke="#e9b552" strokeWidth="6" strokeLinejoin="round" />
    <Layer shapes={roads} fill="none" stroke="#f8e2b5" strokeWidth="6.5" strokeLinejoin="round" />
    <Layer shapes={thinRoads} fill="none" stroke="#f8e2b5" strokeWidth="2.5" strokeLinejoin="round" />
    <Layer shapes={solidBorders} fill="none" stroke="#6c747c" strokeWidth="4" />
    <Layer shapes={redBorder.map((d) => ["york", d])} fill="none" stroke="#ea4335" strokeWidth="8" strokeDasharray="8 6" />
    {dots.map(([sheet, x, y, r]) => (
      <circle key={sheet + x + y} transform={place(sheet)} cx={x} cy={y} r={r} fill="#fff" stroke={r > 10 ? "#17191c" : "#4a4e53"} strokeWidth="4" />
    ))}
    <circle transform={place("york")} cx="461" cy="129" r="7" fill="#17191c" />
    {labels.map(([sheet, text, x, y, width, kind]) => (
      <MapLabel key={sheet + text} transform={place(sheet)} x={x} y={y} textLength={width} $kind={kind}>{text}</MapLabel>
    ))}
    <MapLabel $kind="lake" transform={`${place("west")} translate(938 562) rotate(-85)`} textLength="148">Lake M</MapLabel>
    <defs><path id="huron" d="M448 188Q518 275 540 420" /></defs>
    <MapLabel $kind="lake" transform={place("lakes")}><textPath href="#huron">Lake Huron</textPath></MapLabel>
    <MapLabel $kind="lake" transform={`${place("lakes")} translate(646 955) rotate(-24)`} textLength="174">Lake Erie</MapLabel>
  </MapDrawing>
);

const ArrowIcon = ({ color, flip }) => (
  <svg width="17" height="16" viewBox="0 0 17 16" fill="none" stroke={color} strokeWidth="2" transform={flip ? "scale(-1 1)" : undefined}>
    <path d="M16.500 8H2M8.500 1L1.500 8 8.500 15" />
  </svg>
);

const MapFoldIcon = () => (
  <svg width="47" height="42" viewBox="0 0 47 42" fill="none" stroke="currentColor">
    <path d="M1.500 7L15.500 1.500 30 7 44.500 1.500V33L30 39 15.500 33 1.500 39Z" strokeWidth="2.6" />
    <path d="M15.500 2V34M30 7V39" strokeWidth="1.2" />
  </svg>
);

const EnvelopeIcon = () => (
  <svg width="41" height="33" viewBox="0 0 41 33" fill="none" stroke="currentColor" strokeWidth="2.6">
    <rect x="1.500" y="1.500" width="38" height="30" rx="2.500" />
    <path d="M1.500 6Q2 10 6 13L15 20.500Q20.500 25 26 20.500L35 13Q39 10 39.500 6" />
  </svg>
);

const contacts = [
  { icon: <MapFoldIcon />, title: "Visit Us Daily:", track: 0.6, gap: 17, lines: ["New York United States, LY-90814", "Hill Station 2nd Street."], text: 0.62 },
  { icon: <PhoneIcon size={32} />, title: "Phone Us 24/7:", track: 0.3, gap: 12, lines: ["+1-2345-678-11", "+1-2345-678-11"], text: 1.85 },
  { icon: <EnvelopeIcon />, title: "Mail Us 24/7:", track: 0.3, gap: 12, lines: ["Preventive@email.com", "Preventive@email.com"], text: 0.32 },
];

const google = [["G", "#4285f4"], ["o", "#ea4335"], ["o", "#fbbc05"], ["g", "#4285f4"], ["l", "#34a853"], ["e", "#ea4335"]];

export default function App() {
  return (
    <Browser>
      <Global />
      <Toolbar>
        <NavButtons>
          <ArrowIcon color="#5f6368" />
          <ArrowIcon color="#babcbe" flip />
          <svg width="18" height="18" viewBox="0 0 18 18" fill="none" stroke="#5f6368" strokeWidth="2">
            <path d="M14.800 4A7.200 7.200 0 1 0 15.800 11.500" />
            <path d="M17.500 1V7.500H11Z" fill="#5f6368" stroke="none" />
          </svg>
        </NavButtons>
        <AddressBar>
          <svg width="11" height="15" viewBox="0 0 11 15">
            <path d="M2.800 7V3.800a2.700 2.700 0 0 1 5.400 0V7" fill="none" stroke="#5f6368" strokeWidth="1.600" />
            <rect y="5.500" width="11" height="9" rx="1" fill="#5f6368" />
          </svg>
          <Url>jolly-pebble-096579610.3.azurestaticapps.net<span>/contact.html</span></Url>
          <AddressActions>
            <svg width="20" height="20" viewBox="0 0 20 20" fill="none" stroke="#5f6368" strokeWidth="1.4">
              <path d="M2 5V18.500H16V15.500M5 14Q6 6 13 6V2.500L19 8 13 13V10Q8 10 5 14Z" />
            </svg>
            <svg width="20" height="20" viewBox="0 0 20 20" fill="none" stroke="#5f6368" strokeWidth="1.700">
              <path d="M10 2L12.300 7.500 18 8 13.700 12 15 17.700 10 14.600 5 17.700 6.300 12 2 8 7.700 7.500Z" />
            </svg>
          </AddressActions>
        </AddressBar>
        <ToolbarEnd>
          <svg width="18" height="18" viewBox="0 0 18 18">
            <path d="M1 1H17V17H1Z" fill="none" stroke="#5f6368" strokeWidth="2" />
            <path d="M12 1H17V17H12Z" fill="#5f6368" />
          </svg>
          <Avatar>M</Avatar>
          <svg width="18" height="18" viewBox="0 0 18 18" fill="#5f6368">
            <circle cx="9.500" cy="2.500" r="2" /><circle cx="9.500" cy="9" r="2" /><circle cx="9.500" cy="15.500" r="2" />
          </svg>
        </ToolbarEnd>
      </Toolbar>
      <Viewport>
        <Page>
          <Cards>
            {contacts.map((c) => (
              <Card key={c.title}>
                <CardIcon>{c.icon}</CardIcon>
                <CardTitle $track={c.track}>{c.title}</CardTitle>
                <CardText $gap={c.gap} $track={c.text}>{c.lines[0]}<br />{c.lines[1]}</CardText>
              </Card>
            ))}
          </Cards>
          <MapSection>
            <MapFrame>
              <RegionMap />
              <PlaceCard>
                <PlaceInfo>
                  <PlaceName>New York</PlaceName>
                  <PlaceRegion>United States</PlaceRegion>
                  <LargerMap>View larger map</LargerMap>
                </PlaceInfo>
                <Directions>
                  <svg width="24" height="24" viewBox="0 0 24 24">
                    <path d="M1 4L4 0 13 9 10 13Z" fill="#b4cdfb" />
                    <path d="M9 24V14Q9 11 11 9L16 4 13 1H24V12L20 8 15 13Q14 14 14 16V24Z" fill="#5c92f8" />
                  </svg>
                  <MapLink>Directions</MapLink>
                </Directions>
              </PlaceCard>
              <Satellite />
              <GoogleMark>{google.map(([ch, c], i) => <Letter key={i} $c={c}>{ch}</Letter>)}</GoogleMark>
              <ZoomControl><ZoomOut /></ZoomControl>
              <BackToTop>
                <svg width="20" height="14" viewBox="0 0 20 14" fill="none" stroke="#fff" strokeWidth="2">
                  <path d="M0 12H11Q15.500 12 15.500 7V2M11.500 6L15.500 2 19.500 6" />
                </svg>
              </BackToTop>
            </MapFrame>
          </MapSection>
        </Page>
        <Scrollbar>
          <svg width="10" height="5" viewBox="0 0 10 5"><path d="M0 5L5 0 10 5Z" fill="#505050" /></svg>
          <Thumb />
          <svg width="10" height="5" viewBox="0 0 10 5"><path d="M0 0L5 5 10 0Z" fill="#505050" /></svg>
        </Scrollbar>
      </Viewport>
    </Browser>
  );
}
